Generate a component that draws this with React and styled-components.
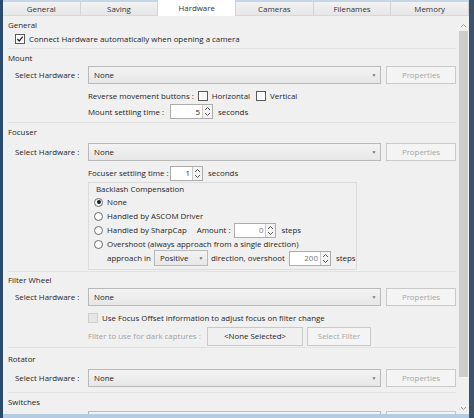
import React from 'react';
import styled, { createGlobalStyle } from 'styled-components';

const Global = createGlobalStyle`
  html, body { margin: 0; padding: 0; background: #f0f0f0; }
  * { box-sizing: border-box; }
`;

const Window = styled.div`
  width: 474px;
  height: 418px;
  overflow: hidden;
  display: flex;
  flex-direction: column;
  background: #f0f0f0;
  border-left: 3px solid #2d4a68;
  border-right: 5px solid #3a536e;
  font-family: "Open Sans", "Noto Sans", sans-serif;
  font-size: 7.9px;
  color: #1e1e1e;
`;

const TabStrip = styled.div`
  display: flex;
  height: 16px;
  flex-shrink: 0;
  border-top: 2px solid #c5d6e8;
  background: #f0f0f0;
  border-bottom: 1px solid #d9d9d9;
`;

const Tab = styled.div`
  flex: 1;
  display: flex;
  align-items: center;
  justify-content: center;
  border-right: 1px solid #d4d4d4;
  background: ${(p) => (p.$active ? '#ffffff' : 'linear-gradient(#f2f2f2, #e6e6e6)')};
  margin-top: ${(p) => (p.$active ? '-2px' : '0')};
  margin-bottom: ${(p) => (p.$active ? '-1px' : '0')};
  color: #333;
`;

const Body = styled.div`
  flex: 1;
  display: flex;
  min-height: 0;
`;

const Panel = styled.div`
  flex: 1;
  padding: 0 2px 0 5px;
  overflow: hidden;
`;

const ScrollBar = styled.div`
  width: 11px;
  display: flex;
  flex-direction: column;
  align-items: stretch;
  background: #f0f0f0;
  margin-top: 3px;
`;

const ScrollArrow = styled.div`
  height: 12px;
  display: flex;
  align-items: center;
  justify-content: center;
`;

const Thumb = styled.div`
  margin: 0 1px 25px;
  flex: 1;
  background: #cdcdcd;
`;

const Section = styled.div`
  border-bottom: 1px solid #e2e2e2;
  padding-bottom: ${(p) => p.$pb ?? 3}px;
`;

const Title = styled.div`
  height: 15px;
  display: flex;
  align-items: center;
  margin-top: ${(p) => p.$mt || 0}px;
`;

const Row = styled.div`
  display: flex;
  align-items: center;
  white-space: nowrap;
  height: ${(p) => p.$h || 16}px;
  padding-left: ${(p) => p.$indent || 0}px;
  margin-top: ${(p) => p.$mt || 0}px;
  color: ${(p) => (p.$disabled ? '#a2a2a2' : 'inherit')};
`;

const Label = styled.span`
  width: ${(p) => p.$w || 'auto'};
  margin-left: ${(p) => p.$ml || 0}px;
  flex-shrink: 0;
  white-space: nowrap;
`;

const SelectBox = styled.div`
  flex: 1;
  height: 18px;
  border: 1px solid #b9b9b9;
  background: linear-gradient(#f3f3f3, #e7e7e7);
  display: flex;
  align-items: center;
  padding-left: 5px;
  justify-content: space-between;
  margin-right: 5px;
`;

const SmallSelect = styled(SelectBox)`
  flex: none;
  width: ${(p) => p.$w}px;
  height: 16px;
  margin: 0 3px;
`;

const Caret = styled.span`
  width: 12px;
  font-size: 5px;
  color: #777;
  text-align: center;
`;

const Button = styled.div`
  width: ${(p) => p.$w || 70}px;
  height: ${(p) => p.$h || 18}px;
  border: 1px solid #c9c9c9;
  background: ${(p) => (p.$plain ? '#f0f0f0' : '#f4f4f4')};
  color: ${(p) => (p.$plain ? '#262626' : '#a6a6a6')};
  display: flex;
  align-items: center;
  justify-content: center;
  flex-shrink: 0;
  margin-right: ${(p) => p.$mr || 0}px;
`;

const Box = styled.span`
  width: 10px;
  height: 10px;
  border: 1px solid ${(p) => (p.$disabled ? '#cfcfcf' : '#5a5a5a')};
  background: ${(p) => (p.$disabled ? '#e6e6e6' : '#fff')};
  display: inline-flex;
  align-items: center;
  justify-content: center;
  margin-right: 4px;
  margin-left: ${(p) => p.$ml || 0}px;
  flex-shrink: 0;
`;

const Radio = styled.span`
  width: 9px;
  height: 9px;
  border-radius: 50%;
  border: 1px solid #6a6a6a;
  background: #fff;
  display: inline-flex;
  align-items: center;
  justify-content: center;
  margin-right: 4px;
  flex-shrink: 0;
  &::after {
    content: '';
    width: 4px;
    height: 4px;
    border-radius: 50%;
    background: ${(p) => (p.$on ? '#1a1a1a' : 'transparent')};
  }
`;

const Spin = styled.div`
  width: ${(p) => p.$w}px;
  height: 15px;
  border: 1px solid #acacac;
  background: #fff;
  display: flex;
  align-items: center;
  margin: 0 5px 0 ${(p) => p.$ml ?? 0}px;
  flex-shrink: 0;
`;

const SpinValue = styled.span`
  flex: 1;
  text-align: right;
  padding-right: 2px;
  color: ${(p) => (p.$dim ? '#777' : 'inherit')};
`;

const SpinArrows = styled.div`
  width: 10px;
  height: 100%;
  border-left: 1px solid #c9c9c9;
  display: flex;
  flex-direction: column;
  align-items: center;
  justify-content: center;
  background: #f4f4f4;
`;

const Group = styled.fieldset`
  margin: 1px 0 0 80px;
  width: 268px;
  border: 1px solid #dcdcdc;
  padding: 0 0 4px 5px;
`;

const Legend = styled.div`
  height: 12px;
  display: flex;
  align-items: center;
  padding-left: 2px;
`;

const Check = () => (
  <svg width="8" height="8" viewBox="0 0 9 9">
    <path d="M1.5 4.5 L3.6 6.8 L7.6 1.8" fill="none" stroke="#222" strokeWidth="1.5" />
  </svg>
);

const Arrows = () => (
  <SpinArrows>
    <svg width="7" height="11" viewBox="0 0 7 11">
      <path d="M1 4 L3.5 1.5 L6 4" fill="none" stroke="#555" strokeWidth="1" />
      <path d="M1 7 L3.5 9.5 L6 7" fill="none" stroke="#555" strokeWidth="1" />
    </svg>
  </SpinArrows>
);

const HardwareRow = ({ mt }) => (
  <Row $h={18} $indent={7} $mt={mt}>
    <Label $w="73px">Select Hardware :</Label>
    <SelectBox>
      None<Caret>&#9660;</Caret>
    </SelectBox>
    <Button $w={70}>Properties</Button>
  </Row>
);

const tabs = ['General', 'Saving', 'Hardware', 'Cameras', 'Filenames', 'Memory'];

export default function App() {
  return (
    <Window>
      <Global />
      <TabStrip>
        {tabs.map((t) => (
          <Tab key={t} $active={t === 'Hardware'}>{t}</Tab>
        ))}
      </TabStrip>
      <Body>
        <Panel>
          <Section $pb={2}>
            <Title $mt={1}>General</Title>
            <Row $h={14} $indent={7}>
              <Box><Check /></Box>
              Connect Hardware automatically when opening a camera
            </Row>
          </Section>

          <Section $pb={2}>
            <Title $mt={1}>Mount</Title>
            <HardwareRow mt={1} />
            <Row $h={14} $indent={80} $mt={5}>
              Reverse movement buttons :
              <Box $ml={4} />Horizontal
              <Box $ml={6} />Vertical
            </Row>
            <Row $h={17} $indent={80}>
              <Label $w="82px">Mount settling time :</Label>
              <Spin $w={43}><SpinValue>5</SpinValue><Arrows /></Spin>
              seconds
            </Row>
          </Section>

          <Section $pb={1}>
            <Title $mt={1}>Focuser</Title>
            <HardwareRow mt={4} />
            <Row $h={16} $indent={80} $mt={4}>
              <Label $w="82px">Focuser settling time :</Label>
              <Spin $w={33}><SpinValue>1</SpinValue><Arrows /></Spin>
              seconds
            </Row>
            <Group>
              <Legend>Backlash Compensation</Legend>
              <Row $h={14}><Radio $on />None</Row>
              <Row $h={14}><Radio />Handled by ASCOM Driver</Row>
              <Row $h={14}>
                <Radio />Handled by SharpCap
                <Label $ml={10}>Amount :</Label>
                <Spin $w={42} $ml={4}><SpinValue $dim>0</SpinValue><Arrows /></Spin>
                steps
              </Row>
              <Row $h={14}><Radio />Overshoot (always approach from a single direction)</Row>
              <Row $h={14} $indent={13}>
                approach in
                <SmallSelect $w={54}>Positive<Caret>&#9660;</Caret></SmallSelect>
                direction, overshoot
                <Spin $w={42} $ml={4}><SpinValue $dim>200</SpinValue><Arrows /></Spin>
                steps
              </Row>
            </Group>
          </Section>

          <Section $pb={1}>
            <Title>Filter Wheel</Title>
            <HardwareRow mt={1} />
            <Row $h={15} $indent={80} $mt={4}>
              <Box $disabled />
              <Label>Use Focus Offset information to adjust focus on filter change</Label>
            </Row>
            <Row $h={20} $indent={80} $mt={1} $disabled>
              <Label $w="119px">Filter to use for dark captures :</Label>
              <Button $w={96} $h={19} $plain $mr={4}>
                &lt;None Selected&gt;
              </Button>
              <Button $w={64} $h={19}>Select Filter</Button>
            </Row>
          </Section>

          <Section $pb={5}>
            <Title $mt={3}>Rotator</Title>
            <HardwareRow mt={3} />
          </Section>

          <Section>
            <Title $mt={1}>Switches</Title>
            <HardwareRow mt={2} />
          </Section>
        </Panel>
        <ScrollBar>
          <ScrollArrow>
            <svg width="7" height="5" viewBox="0 0 7 5">
              <path d="M1 4 L3.5 1.5 L6 4" fill="none" stroke="#999" strokeWidth="1" />
            </svg>
          </ScrollArrow>
          <Thumb />
          <ScrollArrow>
            <svg width="7" height="5" viewBox="0 0 7 5">
              <path d="M1 1 L3.5 3.5 L6 1" fill="none" stroke="#999" strokeWidth="1" />
            </svg>
          </ScrollArrow>
        </ScrollBar>
      </Body>
      <BottomEdge />
    </Window>
  );
}

const BottomEdge = styled.div`
  height: 4px;
  flex-shrink: 0;
  background: #b4cbe2;
`;
